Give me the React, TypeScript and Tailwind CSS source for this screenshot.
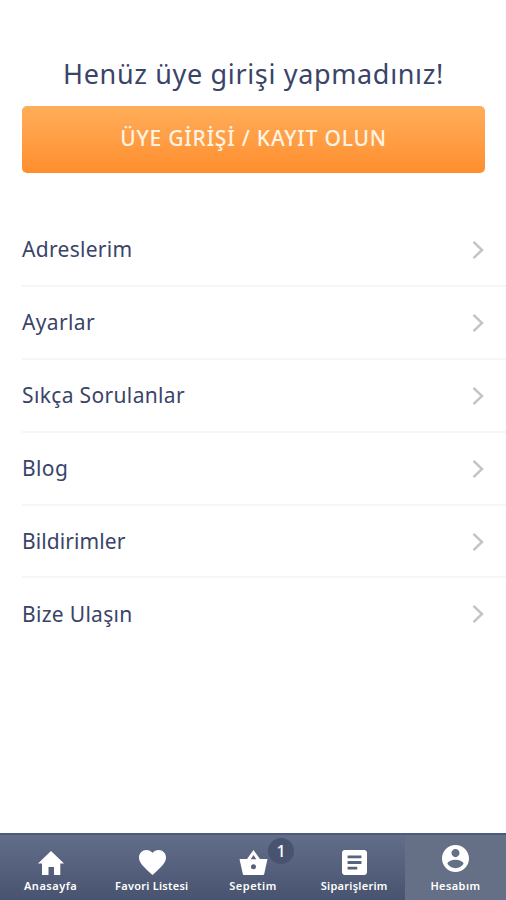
import React from 'react';
import clsx from 'clsx';

const menuItems = [
  { label: 'Adreslerim', tracking: 'tracking-[0.3px]' },
  { label: 'Ayarlar', tracking: 'tracking-[0.35px]' },
  { label: 'Sıkça Sorulanlar', tracking: 'tracking-[0.35px]' },
  { label: 'Blog', tracking: 'tracking-[0.4px]' },
  { label: 'Bildirimler', tracking: 'tracking-[0.1px]' },
  { label: 'Bize Ulaşın', tracking: 'tracking-[0.3px]' },
];

const Chevron: React.FC = () => (
  <svg className="h-5 w-3 shrink-0" viewBox="0 0 12 20" fill="none">
    <path d="M1.5 1.8 10 10 1.5 18.2" stroke="#c4c4c6" strokeWidth="2.5" />
  </svg>
);

const HomeIcon: React.FC = () => (
  <svg className="h-6 w-[26px]" viewBox="0 0 26 24" fill="currentColor">
    <path d="M13 0 26 12.5H22.300V24H16v-8h-5.500v8H4V12.500H0z" />
  </svg>
);

const HeartIcon: React.FC = () => (
  <svg className="h-[25px] w-[27px]" viewBox="2 3 20 18.35" preserveAspectRatio="none" fill="currentColor">
    <path d="m12 21.35-1.45-1.32C5.4 15.36 2 12.28 2 8.5 2 5.42 4.42 3 7.5 3c1.74 0 3.41.81 4.5 2.09C13.09 3.81 14.76 3 16.5 3 19.58 3 22 5.42 22 8.5c0 3.78-3.4 6.86-8.55 11.54L12 21.35z" />
  </svg>
);

const BasketIcon: React.FC = () => (
  <svg className="h-[25px] w-[29px]" viewBox="0 0 29 25" fill="currentColor">
    <path
      fillRule="evenodd"
      d="M14.500 0 21 9h7.500l-3.300 15q-.2 1-1.200 1H5q-1 0-1.200-1L.5 9H8zM14.500 5 11.700 9.200h5.600zM14.500 14.300a2.500 2.500 0 1 0 0 5 2.500 2.500 0 0 0 0-5z"
    />
  </svg>
);

const OrdersIcon: React.FC = () => (
  <svg className="h-[25px] w-[25px]" viewBox="3 3 18 18" fill="currentColor">
    <path d="M19 3H5c-1.1 0-2 .9-2 2v14c0 1.1.9 2 2 2h14c1.1 0 2-.9 2-2V5c0-1.1-.9-2-2-2zm-5 14H7v-2h7v2zm3-4H7v-2h10v2zm0-4H7V7h10v2z" />
  </svg>
);

const AccountIcon: React.FC = () => (
  <svg className="h-[27px] w-[27px]" viewBox="2 2 20 20" fill="currentColor">
    <path d="M12 2C6.48 2 2 6.48 2 12s4.48 10 10 10 10-4.48 10-10S17.52 2 12 2zm0 3c1.66 0 3 1.34 3 3s-1.34 3-3 3-3-1.34-3-3 1.34-3 3-3zm0 14.2c-2.5 0-4.71-1.28-6-3.22.03-1.99 4-3.08 6-3.08 1.99 0 5.97 1.09 6 3.08-1.29 1.94-3.5 3.22-6 3.22z" />
  </svg>
);

const tabs = [
  { label: 'Anasayfa', icon: <HomeIcon />, tracking: 'tracking-[0.5px]' },
  { label: 'Favori Listesi', icon: <HeartIcon />, tracking: 'tracking-[0.25px]' },
  { label: 'Sepetim', icon: <BasketIcon />, tracking: 'tracking-[0.5px]', badge: 1 },
  { label: 'Siparişlerim', icon: <OrdersIcon />, tracking: 'tracking-[0.25px]' },
  { label: 'Hesabım', icon: <AccountIcon />, tracking: 'tracking-[0.4px]', active: true },
];

const App: React.FC = () => {
  return (
    <div className="flex h-[900px] w-full max-w-[506px] flex-col overflow-hidden bg-white font-['Noto_Sans','Open_Sans',sans-serif] text-[#3a4468]">
      <header className="px-[22px] pt-[54px]">
        <h1 className="pl-px text-center text-[27px] leading-10 tracking-[0.65px] whitespace-nowrap">
          Henüz üye girişi yapmadınız!
        </h1>
        <button className="mt-3 flex h-[67px] w-[463px] items-center justify-center rounded-[5px] bg-linear-to-b from-[#ffad59] to-[#ff8e2c] pb-px text-[21px] font-medium tracking-[0.8px] whitespace-nowrap text-[#fff4e4]">
          ÜYE GİRİŞİ / KAYIT OLUN
        </button>
      </header>

      <ul className="mt-[41px] pl-[22px]">
        {menuItems.map((item, i) => (
          <li
            key={item.label}
            className={clsx(
              'flex h-[72.9px] items-center justify-between border-b-2 pt-px pr-[22px]',
              i < menuItems.length - 1 ? 'border-[#f6f6f7]' : 'border-transparent'
            )}
          >
            <span className={clsx('text-[21px] whitespace-nowrap', item.tracking)}>{item.label}</span>
            <Chevron />
          </li>
        ))}
      </ul>

      <nav className="mt-auto grid h-[67px] shrink-0 grid-cols-5 border-t-2 border-[#4e5a7b] bg-linear-to-b from-[#626d8a] to-[#48546f] text-white">
        {tabs.map((tab) => (
          <div key={tab.label} className={clsx('flex flex-col items-center pt-[7px]', tab.active && 'bg-[#656f86]')}>
            <div
              className={clsx(
                'relative flex h-[33px] justify-center pl-px',
                tab.active ? 'items-start pt-[3px]' : 'items-end'
              )}
            >
              {tab.icon}
              {tab.badge && (
                <span className="absolute -top-1 left-[30px] flex size-[26px] items-center justify-center rounded-full bg-[#48546f] text-base font-medium">
                  {tab.badge}
                </span>
              )}
            </div>
            <span className={clsx('mt-[3px] text-[11px] leading-4 font-semibold whitespace-nowrap', tab.tracking)}>
              {tab.label}
            </span>
          </div>
        ))}
      </nav>
    </div>
  );
};

export default App;
